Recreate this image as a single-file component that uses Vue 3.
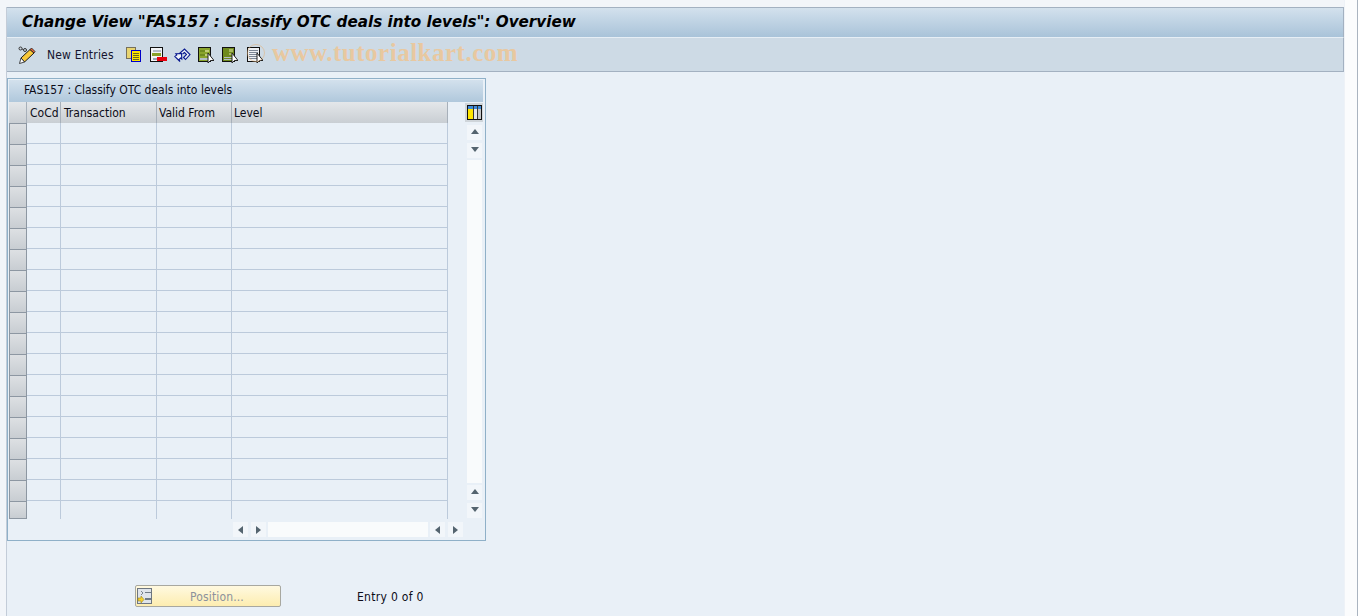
<script setup>
const columns = ['CoCd', 'Transaction', 'Valid From', 'Level']
const rows = Array.from({ length: 19 }, (_, i) => i)
</script>

<template>
  <div class="screen">
    <div class="main">
      <header class="title-bar">
        <h1>Change View "FAS157 : Classify OTC deals into levels": Overview</h1>
      </header>
      <div class="toolbar">
        <svg class="ico pencil" width="18" height="18" viewBox="0 0 18 18">
          <path d="M6.500 16L3 12 12 3.500 16 7z" fill="#f8c838" stroke="#1c1c1c" stroke-width="1"/>
          <path d="M12 3.500L16 7 17 5.500 13.500 2z" fill="#e8683c" stroke="#1c1c1c" stroke-width=".8"/>
          <path d="M3 12L6.500 16 1.500 17.500z" fill="#fff" stroke="#1c1c1c" stroke-width=".8"/>
          <circle cx="2.500" cy="2.500" r="1.500" fill="none" stroke="#333"/>
          <circle cx="7" cy="4" r="1.500" fill="none" stroke="#333"/>
          <path d="M4 3l1.500 .5" stroke="#333"/>
        </svg>
        <span class="new-entries">New Entries</span>
        <svg class="ico i-copy" width="16" height="16" viewBox="0 0 16 16" shape-rendering="crispEdges">
          <rect x="0.500" y="0.500" width="9" height="11" fill="#e8d470" stroke="#77705a"/>
          <rect x="5.500" y="3.500" width="9" height="11" fill="#ffe600" stroke="#0000c8"/>
          <path d="M7 6.500h6M7 8.500h6M7 10.500h6M7 12.500h6" stroke="#6a6a20"/>
        </svg>
        <svg class="ico i-del" width="17" height="16" viewBox="0 0 17 16" shape-rendering="crispEdges">
          <rect x="0.500" y="0.500" width="12" height="14" fill="#f2f4f6" stroke="#111"/>
          <rect x="3" y="3" width="8" height="2" fill="#b4bcc8"/>
          <rect x="2" y="6" width="9" height="3" fill="#88a028"/>
          <rect x="3" y="11" width="4" height="2" fill="#98a4b4"/>
          <rect x="7" y="10" width="10" height="4" fill="#e8000c"/>
        </svg>
        <svg class="ico i-undo" width="17" height="16" viewBox="0 0 17 16">
          <path d="M6 14.500L.8 9.500 2.800 8 1.800 6.800 7.500 6.500 7.800 12 6.500 11 5 12.500zM5.500 6.500L10.500 2 16 7.500 11.500 12.500 9.500 10.500 12.500 7.500 10.500 5.500 8.500 7" fill="#eef2f8" stroke="#0a1a90" stroke-width="1.100" stroke-linejoin="miter"/>
        </svg>
        <svg class="ico i-sel" width="16" height="16" viewBox="0 0 16 16" shape-rendering="crispEdges">
          <rect x="0.500" y="0.500" width="12" height="14" fill="#8aa42c" stroke="#111"/>
          <path d="M2 3h9v2H2zM2 7h9v2H2z" fill="#6f8a1e"/>
          <path d="M7 3h4v2H7zM7 7h4v2H7z" fill="#c0cc78"/>
          <path d="M2 11h9v2H2z" fill="#b4bec8"/>
          <path d="M10 6v10l2.500 -2.500h3.500z" fill="#fff" stroke="#222" shape-rendering="auto"/>
        </svg>
        <svg class="ico i-sel2" width="16" height="16" viewBox="0 0 16 16" shape-rendering="crispEdges">
          <rect x="0.500" y="0.500" width="12" height="14" fill="#6f8a1e" stroke="#111"/>
          <path d="M7 2h4v3H7zM7 6h4v2H7z" fill="#a8b860"/>
          <path d="M2 10h9v1H2zM2 12h9v1H2z" fill="#b4bec8"/>
          <path d="M10 6v10l2.500 -2.500h3.500z" fill="#fff" stroke="#222" shape-rendering="auto"/>
        </svg>
        <svg class="ico i-sel3" width="16" height="16" viewBox="0 0 16 16" shape-rendering="crispEdges">
          <rect x="0.500" y="0.500" width="12" height="14" fill="#eef1f4" stroke="#111"/>
          <path d="M2 3h9v1H2zM2 5h9v1H2zM2 7h9v1H2zM2 9h9v1H2zM2 11h9v1H2z" fill="#7c8694"/>
          <path d="M10 6v10l2.500 -2.500h3.500z" fill="#fff" stroke="#222" shape-rendering="auto"/>
        </svg>
        <span class="logo-ring"></span>
        <span class="watermark">www.tutorialkart.com</span>
      </div>

      <section class="panel">
        <div class="panel-title">FAS157 : Classify OTC deals into levels</div>
        <div class="panel-body">
          <div class="table">
            <div class="corner"></div>
            <div v-for="c in columns" :key="c" class="th">{{ c }}</div>
            <template v-for="r in rows" :key="r">
              <div class="sel"></div>
              <div v-for="c in columns" :key="c" class="td"></div>
            </template>
          </div>
          <div class="vscroll">
            <button class="config">
              <svg width="15" height="15" viewBox="0 0 15 15" shape-rendering="crispEdges">
                <rect x="0.500" y="0.500" width="14" height="14" fill="#fff" stroke="#111"/>
                <rect x="1" y="1" width="13" height="3" fill="#3d8ad8"/>
                <rect x="1" y="4" width="5" height="10" fill="#ffe600"/>
                <rect x="7" y="4" width="3" height="10" fill="#e4e6e8"/>
                <rect x="11" y="4" width="3" height="10" fill="#c4c6c8"/>
                <path d="M6 1h1v13H6zM10 1h1v13h-1z" fill="#333"/>
              </svg>
            </button>
            <button class="sb v first"><i class="tri up"></i></button>
            <button class="sb v second"><i class="tri down"></i></button>
            <div class="vtrack"></div>
            <button class="sb v"><i class="tri up"></i></button>
            <button class="sb v second"><i class="tri down"></i></button>
          </div>
        </div>
        <div class="hscroll">
          <button class="sb h"><i class="tri left"></i></button>
          <button class="sb h"><i class="tri right"></i></button>
          <div class="htrack"></div>
          <button class="sb h"><i class="tri left"></i></button>
          <button class="sb h"><i class="tri right"></i></button>
        </div>
      </section>

      <div class="bottom">
        <button class="position">
          <svg width="16" height="16" viewBox="0 0 16 16" shape-rendering="crispEdges">
            <rect x="0.500" y="0.500" width="14" height="15" fill="#dfe4ea" stroke="#6d7680"/>
            <path d="M8 4h6v1H8zM8 10h6v2H8z" fill="#6f7a86"/>
            <path d="M4 3l2 2-2 2" fill="none" stroke="#7a8490"/>
            <path d="M1 10h3V8l3 3.500L4 15v-2H1z" fill="#f4d030" stroke="#a08820" stroke-width=".6" shape-rendering="auto"/>
          </svg>
          <span>Position...</span>
        </button>
        <span class="entry">Entry 0 of 0</span>
      </div>
    </div>
    <div class="gutter"></div>
  </div>
</template>

<style>
html, body { margin: 0; padding: 0; overflow: hidden; }
</style>

<style scoped>
.screen {
  width: 1358px;
  height: 616px;
  display: flex;
  background: #f2f5f9;
  font-family: "DejaVu Sans", "Noto Sans", sans-serif;
  font-stretch: condensed;
  font-size: 12px;
  color: #0c0c18;
  overflow: hidden;
}
.main {
  width: 1337px;
  height: 609px;
  margin: 7px 0 0 6px;
  background: #e9f0f7;
  border-left: 1px solid #c3ccd8;
  flex: none;
}
.gutter {
  flex: 1;
  background: #fbfcfd;
  border-left: 1px solid #eef2f7;
  border-right: 1px solid #aab4c0;
}
.title-bar {
  height: 30px;
  box-sizing: border-box;
  border-top: 1px solid #a3b1c1;
  border-right: 1px solid #a3b1c1;
  background: linear-gradient(#d3e1ed, #a9c3d9);
  display: flex;
  align-items: center;
  padding: 0 0 2px 15px;
}
h1 {
  margin: 0;
  font-family: "DejaVu Sans", sans-serif;
  font-stretch: normal;
  font-size: 15.200px;
  font-weight: bold;
  font-style: italic;
  color: #000;
  white-space: nowrap;
}
.toolbar {
  height: 35px;
  box-sizing: border-box;
  border-top: 1px solid #e6eef5;
  border-right: 1px solid #a3b1c1;
  border-bottom: 1px solid #a3b1c1;
  background: #cddae5;
  display: flex;
  align-items: center;
  padding-left: 11px;
  position: relative;
}
.ico { flex: none; display: block; }
.pencil { margin-right: 11px; }
.new-entries { width: 79px; flex: none; color: #14142e; letter-spacing: .2px; }
.i-copy { margin-right: 8px; }
.i-del { margin-right: 7px; }
.i-undo { margin-right: 7px; }
.i-sel { margin-right: 8px; }
.i-sel2 { margin-right: 9px; }
.i-sel3 { margin-right: 9px; }
.logo-ring {
  position: absolute;
  left: 240px;
  top: 6px;
  width: 16px;
  height: 16px;
  border: 1px solid rgba(226, 176, 120, .55);
  border-radius: 50%;
}
.watermark {
  font-family: "Liberation Serif", serif;
  font-stretch: normal;
  font-weight: bold;
  font-size: 25px;
  color: #e8c8a0;
  white-space: nowrap;
  letter-spacing: .5px;
  margin-top: -3px;
}
.panel {
  width: 479px;
  height: 463px;
  box-sizing: border-box;
  margin-top: 6px;
  border: 1px solid #8fb0c8;
  padding: 1px;
  background: #e9f0f7;
}
.panel-title {
  height: 22px;
  box-sizing: border-box;
  width: 474px;
  padding-left: 15px;
  line-height: 20px;
  background: linear-gradient(#d3e1ed, #b0c8dc);
  white-space: nowrap;
}
.panel-body { display: flex; height: 417px; }
.table {
  width: 439px;
  display: grid;
  grid-template-columns: 18px 34px 96px 75px 216px;
  grid-template-rows: 21px repeat(18, 21px) 18px;
}
.corner, .th {
  background: linear-gradient(#e4e7ea, #c9ced3);
  border-right: 1px solid #a7b0ba;
  box-sizing: border-box;
}
.th {
  padding-left: 3px;
  line-height: 22px;
  white-space: nowrap;
  overflow: hidden;
}
.th:nth-child(4), .th:nth-child(5) { padding-left: 2px; }
.sel {
  box-sizing: border-box;
  background: linear-gradient(#dde0e3, #c8cdd2);
  border: 1px solid #8d97a2;
  border-width: 1px 1px 0 1px;
}
.sel:nth-last-child(5) { border-bottom-width: 1px; }
.td {
  box-sizing: border-box;
  border-right: 1px solid #bccadb;
  border-bottom: 1px solid #bccadb;
}
.td:nth-last-child(-n+4) { border-bottom: none; }
.vscroll {
  margin-left: 18px;
  width: 17px;
  display: flex;
  flex-direction: column;
  align-items: center;
  padding-bottom: 1px;
  box-sizing: border-box;
}
button {
  padding: 0;
  margin: 0;
  border: none;
  font: inherit;
  display: flex;
  align-items: center;
  justify-content: center;
}
.config {
  width: 18px;
  height: 19px;
  margin: 1px 0 0 -1px;
  padding-left: 1px;
  background: #cfd5da;
  flex: none;
}
.sb { background: #f2f6fa; flex: none; }
.sb.v { width: 15px; height: 15px; margin-top: 2px; }
.sb.v.first { margin-top: 3px; }
.sb.v.second { margin-top: 3px; }
.vtrack {
  flex: 1;
  width: 15px;
  margin-top: 2px;
  background: #f9fbfc;
  min-height: 0;
}
.tri { display: block; width: 0; height: 0; border-style: solid; border-color: transparent; }
.tri.up { border-width: 0 4px 5px; border-bottom-color: #54646f; margin-top: -2px; }
.tri.down { border-width: 5px 4px 0; border-top-color: #54646f; margin-top: -2px; }
.tri.left { border-width: 4px 5px 4px 0; border-right-color: #54646f; }
.tri.right { border-width: 4px 0 4px 5px; border-left-color: #54646f; }
.hscroll {
  display: flex;
  height: 15px;
  margin-top: 3px;
  padding-left: 224px;
  gap: 3px;
}
.sb.h { width: 15px; height: 15px; }
.htrack { width: 160px; margin: 0 -1px; background: #f9fbfc; }
.bottom {
  display: flex;
  align-items: flex-start;
  height: 22px;
  margin-top: 44px;
  padding-left: 128px;
}
.position {
  width: 146px;
  height: 22px;
  box-sizing: border-box;
  position: relative;
  border: 1px solid #a8a8a0;
  border-radius: 2px;
  background: linear-gradient(#fff9e0, #fdedb0);
  color: #8c929c;
  justify-content: flex-start;
  padding-left: 1px;
}
.position svg { flex: none; }
.position span { margin-left: 37px; padding-top: 1px; letter-spacing: .15px; }
.entry { margin-left: 76px; line-height: 24px; color: #0c0c18; letter-spacing: .3px; }
</style>
